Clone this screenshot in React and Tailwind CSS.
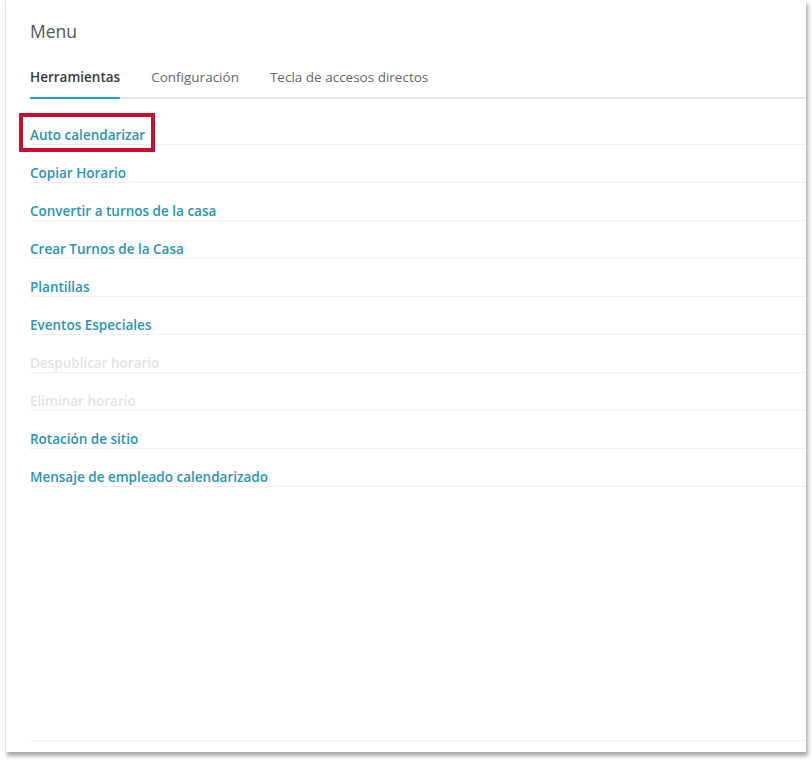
export default function App() {
  const items = [
    { t: "Auto calendarizar", d: false },
    { t: "Copiar Horario", d: false },
    { t: "Convertir a turnos de la casa", d: false },
    { t: "Crear Turnos de la Casa", d: false },
    { t: "Plantillas", d: false },
    { t: "Eventos Especiales", d: false },
    { t: "Despublicar horario", d: true },
    { t: "Eliminar horario", d: true },
    { t: "Rotación de sitio", d: false },
    { t: "Mensaje de empleado calendarizado", d: false },
  ];
  return (
    <div className="w-[812px] h-[762px] bg-white overflow-hidden" style={{ fontFamily: '"Open Sans", "Liberation Sans", sans-serif' }}>
      <div className="relative ml-[5px] w-[801px] h-[752px] bg-white border-l border-[#e2e2e2] shadow-[2px_4px_4px_rgba(0,0,0,0.35)] flex flex-col">
        <div className="pl-[24px] pt-[18px] text-[17.5px] leading-[26px] text-[#555]">Menu</div>
        <div className="ml-[24px] mt-[23px] flex gap-[31px] border-b-2 border-[#e6e6e6]">
          <div className="pb-[10px] text-[13.5px] leading-[20px] font-semibold text-[#3a3a3a] border-b-2 border-[#1e9fd2] -mb-[2px]">Herramientas</div>
          <div className="pb-[10px] text-[13.5px] leading-[20px] text-[#666]">Configuración</div>
          <div className="pb-[10px] text-[13.5px] leading-[20px] text-[#666]">Tecla de accesos directos</div>
        </div>
        <div className="ml-[24px] mt-[8px] flex flex-col">
          {items.map((it) => (
            <div key={it.t} className="h-[38px] flex items-start border-b border-[#f0f0f0]">
              <span className={"pt-[20px] text-[13.5px] leading-[17px] font-semibold " + (it.d ? "text-[#e3e3e3]" : "text-[#2794b8]")}>{it.t}</span>
            </div>
          ))}
        </div>
        <div className="flex-1" />
        <div className="ml-[24px] mb-[11px] border-b border-[#f0f0f0]" />
        <div className="absolute left-[13px] top-[113px] w-[136px] h-[39px] border-[4px] border-[#c8102e]" />
      </div>
    </div>
  );
}
